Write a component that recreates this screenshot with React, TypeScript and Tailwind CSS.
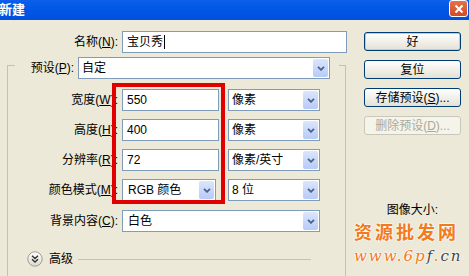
import type { ReactNode } from "react";

function Chevron() {
  return (
    <svg width="8" height="5" viewBox="0 0 8 5">
      <path d="M1 0.8 L4 3.8 L7 0.8" stroke="#4d6185" strokeWidth="1.8" fill="none" />
    </svg>
  );
}

function Key({ pre, k, end = ":" }: { pre: string; k: string; end?: string }) {
  return (
    <span className="whitespace-nowrap">
      {pre}(<span className="underline">{k}</span>){end}
    </span>
  );
}

function Input({ value, width }: { value: string; width: string }) {
  return (
    <div className={`flex h-[22px] items-center border border-[#7f9db9] bg-white pl-[4px] ${width}`}>
      {value}
    </div>
  );
}

function Select({ value, width, extra = "" }: { value: string; width: string; extra?: string }) {
  return (
    <div className={`flex h-[22px] items-center border border-[#7f9db9] bg-white ${width} ${extra}`}>
      <span className="flex-1 pl-[3px] whitespace-nowrap">{value}</span>
      <span className="mr-[1px] flex h-[18px] w-[15px] items-center justify-center rounded-[2px] bg-gradient-to-b from-[#dbe6fd] to-[#b7cbf8]">
        <Chevron />
      </span>
    </div>
  );
}

function Row({ label, children, mt }: { label: ReactNode; children: ReactNode; mt: string }) {
  return (
    <div className={`flex h-[22px] items-center ${mt}`}>
      <div className="flex w-[110px] justify-end">{label}</div>
      <div className="ml-[4px] flex items-center">{children}</div>
    </div>
  );
}

function Button({ children, kind = "normal" }: { children: ReactNode; kind?: "default" | "normal" | "disabled" }) {
  const look =
    kind === "disabled"
      ? "border-[#c9c7ba] bg-[#f5f4ea] text-[#aca899]"
      : kind === "default"
        ? "border-[#003c74] bg-gradient-to-b from-white to-[#e4e1d5] shadow-[inset_0_0_0_1px_#b4cbf2]"
        : "border-[#003c74] bg-gradient-to-b from-white to-[#e4e1d5]";
  return (
    <div className={`flex h-[19px] items-center justify-center rounded-[3px] border ${look}`}>{children}</div>
  );
}

export default function App() {
  return (
    <div className="relative flex h-[276px] w-[469px] flex-col overflow-hidden bg-[#ece9d8] font-['Liberation_Sans','Noto_Sans_CJK_SC',sans-serif] text-[12px] leading-[14px] text-black">
      {/* title bar */}
      <div className="flex h-[20px] shrink-0 items-start justify-between bg-gradient-to-b from-[#0c60ea] via-[#0057e4] to-[#0050dc]">
        <span className="-ml-[1px] mt-[2px] text-[13px] font-bold leading-[15px] text-white">新建</span>
        <span className="mr-[1px] flex h-[17px] w-[19px] items-center justify-center rounded-[3px] border border-white bg-gradient-to-b from-[#e8714a] to-[#d24a22]">
          <svg width="10" height="10" viewBox="0 0 10 10">
            <path d="M1.5 1.5 L8.5 8.5 M8.5 1.5 L1.5 8.5" stroke="white" strokeWidth="2" />
          </svg>
        </span>
      </div>

      <div className="flex flex-1">
        {/* left column */}
        <div className="flex w-[350px] flex-col pt-[11px]">
          <div className="flex h-[22px] items-center">
            <div className="flex w-[118px] justify-end">
              <Key pre="名称" k="N" />
            </div>
            <div className="ml-[4px] flex h-[22px] w-[225px] items-center border border-[#7f9db9] bg-white pl-[4px]">
              宝贝秀<span className="ml-[1px] h-[14px] w-px bg-black" />
            </div>
          </div>

          {/* preset group */}
          <div className="ml-[7px] mt-[12px] flex w-[339px] flex-1 flex-col border-x border-t border-[#c5c2b2]">
            <div className="-mt-[9px] ml-[7px] mr-[6px] flex h-[22px] items-center bg-[#ece9d8]">
              <div className="flex w-[59px] justify-end">
                <Key pre="预设" k="P" />
              </div>
              <Select value="自定" width="w-[252px]" extra="ml-[4px]" />
            </div>

            <Row label={<Key pre="宽度" k="W" />} mt="mt-[10px]">
              <Input value="550" width="w-[97px]" />
              <Select value="像素" width="w-[92px]" extra="ml-[9px]" />
            </Row>
            <Row label={<Key pre="高度" k="H" />} mt="mt-[8px]">
              <Input value="400" width="w-[97px]" />
              <Select value="像素" width="w-[92px]" extra="ml-[9px]" />
            </Row>
            <Row label={<Key pre="分辨率" k="R" />} mt="mt-[8px]">
              <Input value="72" width="w-[97px]" />
              <Select value="像素/英寸" width="w-[92px]" extra="ml-[9px]" />
            </Row>
            <Row label={<Key pre="颜色模式" k="M" />} mt="mt-[8px]">
              <Select value="RGB 颜色" width="w-[94px]" extra="pl-[2px]" />
              <Select value="8 位" width="w-[92px]" extra="ml-[12px]" />
            </Row>
            <Row label={<Key pre="背景内容" k="C" />} mt="mt-[9px]">
              <Select value="白色" width="w-[198px]" extra="pl-[2px]" />
            </Row>

            <div className="ml-[19px] mt-[19px] flex h-[16px] items-center">
              <svg width="16" height="16" viewBox="0 0 16 16">
                <defs>
                  <linearGradient id="adv" x1="0" y1="0" x2="0" y2="1">
                    <stop offset="0" stopColor="#ffffff" />
                    <stop offset="1" stopColor="#dcd9cb" />
                  </linearGradient>
                </defs>
                <circle cx="8" cy="8" r="7.2" fill="url(#adv)" stroke="#a09d90" strokeWidth="1" />
                <path d="M5 4.8 L8 7.5 L11 4.8 M5 8.3 L8 11 L11 8.3" stroke="#333" strokeWidth="1.4" fill="none" />
              </svg>
              <span className="ml-[6px]">高级</span>
              <span className="ml-[5px] h-px w-[233px] bg-[#c5c2b2]" />
            </div>
          </div>
        </div>

        {/* right column */}
        <div className="ml-[14px] flex w-[97px] flex-col gap-[9px] pt-[12px]">
          <Button kind="default">好</Button>
          <Button>复位</Button>
          <Button>
            <Key pre="存储预设" k="S" end="..." />
          </Button>
          <Button kind="disabled">
            <Key pre="删除预设" k="D" end="..." />
          </Button>
          <div className="mt-[59px] flex flex-col items-center">
            <span>图像大小:</span>
          </div>
        </div>
      </div>

      {/* highlight box */}
      <div className="absolute left-[112px] top-[83px] h-[121px] w-[113px] border-4 border-[#e10000]" />

      {/* watermark, lying over the size value */}
      <div className="absolute left-[354px] top-[220px] flex flex-col font-['Noto_Sans_CJK_SC',sans-serif] text-[#f27a1f] [text-shadow:0_0_2px_#fff,0_0_2px_#fff,0_0_2px_#fff]">
        <span className="text-[18px] font-bold leading-[22px] tracking-[3px]">资源批发网</span>
        <span className="mt-[6px] font-['DejaVu_Serif',serif] text-[15px] italic leading-[16px] tracking-[2px]">
          www.6p<span className="text-[#444]">f</span>.<span className="text-[#444]">cn</span>
        </span>
      </div>
    </div>
  );
}
